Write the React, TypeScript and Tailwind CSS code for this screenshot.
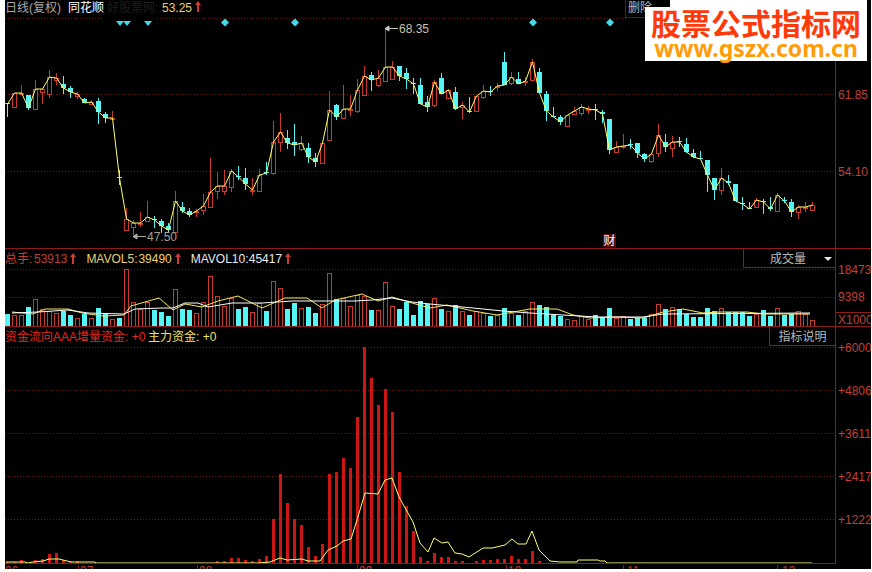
const font = "font-['Liberation_Sans','Noto_Sans_CJK_SC',sans-serif]";

// high, body top, body bottom, low, 1 = up (red) 0 = down (cyan)
const candles: number[][] = [
  [103,103,104,117,0],[93,93,107,108,1],[85,93,94,94,1],[95,95,108,110,0],[80,89,109,109,1],[88,89,92,104,1],[70,77,94,98,1],[73,78,80,85,1],
  [76,84,88,94,0],[86,88,92,98,0],[92,94,96,99,1],[98,99,103,103,0],[100,102,104,105,1],[98,101,112,124,0],[112,114,118,123,0],[111,118,119,120,1],
  [170,177,178,185,0],[208,219,230,230,1],[220,223,227,235,1],[212,223,224,227,1],[201,217,221,221,1],[216,219,220,228,0],[219,221,226,233,0],[223,226,230,233,0],
  [191,201,232,232,1],[202,207,211,213,0],[208,211,215,217,0],[209,211,212,217,1],[194,206,210,215,1],[158,192,207,207,1],[172,186,191,199,1],[170,186,191,195,1],
  [169,171,187,192,1],[166,176,177,180,0],[168,178,184,190,0],[178,190,191,195,1],[169,175,191,191,1],[162,172,173,175,0],[121,142,173,175,1],[113,132,142,152,1],
  [130,138,143,149,0],[124,142,145,156,0],[136,143,149,151,1],[143,148,157,163,0],[153,158,162,167,0],[143,143,163,163,1],[91,110,140,140,1],[104,105,117,120,0],
  [85,109,118,118,1],[95,109,110,116,1],[79,90,111,113,1],[66,76,95,95,1],[72,75,80,91,0],[70,78,85,87,1],[28,67,81,81,1],[61,67,79,79,1],
  [66,66,76,81,0],[68,73,79,89,0],[78,83,84,94,0],[78,85,104,104,0],[96,102,107,112,0],[80,82,105,107,1],[73,78,94,94,0],[89,90,98,98,1],
  [87,92,109,110,0],[102,105,107,119,1],[97,111,112,113,0],[96,96,111,111,1],[85,91,97,99,1],[86,91,92,96,0],[83,86,87,91,1],[52,62,85,85,0],
  [72,77,83,85,1],[72,79,84,84,0],[77,81,82,86,1],[59,62,80,80,1],[68,72,93,93,0],[91,94,111,121,0],[107,116,117,117,0],[115,117,122,125,0],
  [115,115,126,126,1],[107,111,114,114,1],[104,107,113,116,1],[106,109,110,114,1],[104,109,110,120,0],[110,112,114,123,0],[119,119,150,154,0],[141,147,152,152,1],
  [134,146,147,149,1],[139,144,145,149,0],[143,143,153,158,0],[153,154,159,162,0],[154,154,161,163,1],[124,135,153,157,1],[134,142,147,152,0],[136,142,148,157,1],
  [137,141,142,147,0],[138,144,152,153,0],[149,153,157,158,0],[151,158,159,159,0],[160,160,175,192,0],[178,178,190,200,0],[168,178,190,195,1],[175,181,183,185,0],
  [184,184,201,201,0],[197,203,204,210,0],[202,208,209,209,0],[198,200,207,208,1],[199,201,202,214,0],[197,207,209,211,0],[193,195,211,211,1],[197,200,201,203,0],
  [199,202,212,217,0],[205,207,212,219,1],[202,207,208,212,1],[202,205,210,210,1],
];

// bar tops, negative = cyan
const volumes = [
  -314,315,315,-307,299,309,311,313,-311,-315,318,-314,318,-308,-314,319,-318,269,302,309,302,-310,-312,-316,289,-309,-310,313,302,276,
  296,306,298,-309,-307,312,303,-311,281,288,-309,-303,308,-307,-313,304,273,-299,298,306,295,296,-310,310,282,306,-309,-302,-315,-301,-304,
  298,-309,311,-305,311,-315,311,313,-316,315,-308,313,-315,311,302,-305,-307,-315,-316,319,320,316,319,-315,-317,-308,318,316,-319,-318,-318,314,304,-309,307,-309,-314,-317,-317,
  -308,-311,308,-312,-312,-312,-316,314,-310,-316,308,-315,-314,311,314,320,
];

const moneyTops: Record<number, number> = {
  0:562,1:562,2:560,4:560,5:559,6:554,7:553,8:560,9:562,10:561,30:561,31:561,32:558,33:558,34:560,35:561,36:559,
  37:556,38:519,39:474,40:503,41:519,42:525,43:547,44:556,45:544,46:474,47:472,48:458,49:468,50:417,51:347,52:378,53:405,54:389,55:412,56:472,57:506,58:531,59:557,60:561,
  61:553,62:557,63:557,64:561,65:561,67:561,68:560,69:560,70:559,71:559,72:556,73:559,74:559,75:551,76:561,
};

const moneyLine = "6,562 25,562 28,563 33,562 43,561 49,559 59,559 67,561 72,562 95,562 96,563 258,563 270,562 280,558 287,560 302,559 308,561 320,561 328,550 337,546 343,541 351,539 357,520 365,493 378,494 385,480 392,478 399,497 413,522 420,543 428,552 434,538 442,543 448,542 455,553 462,554 469,557 483,548 492,548 505,545 512,539 518,544 526,544 532,531 539,550 550,561 560,562 577,562 578,560 598,560 600,561 605,561 607,563 812,563";

const volYellow = "12,312 33,314 45,309 68,309 82,313 103,316 124,315 131,306 145,302 159,298 173,310 185,304 202,307 218,301 238,296 262,308 278,301 285,298 307,298 322,308 335,300 362,294 378,301 392,297 412,303 430,308 447,305 473,311 497,315 530,309 557,309 573,315 590,318 617,317 643,318 663,312 683,309 703,313 720,312 747,312 763,314 810,314";
const volWhite = "12,313 38,312 68,310 88,313 124,314 135,309 162,308 173,308 185,303 198,303 208,307 232,303 262,303 292,301 332,301 355,301 372,300 392,298 412,302 430,304 473,308 503,311 530,313 563,315 597,317 643,317 663,314 810,313";

const grid = "#6e1616";
const red = "#c8392e";
const cyan = "#55f5f5";

function Up() {
  return (
    <svg width="6" height="11" viewBox="0 0 6 11" className="ml-[3px] shrink-0">
      <polygon points="3,0 6,4 4,4 4,11 2,11 2,4 0,4" fill="#d03a30" />
    </svg>
  );
}

function Dotted({ y, x1 = 5, x2 = 835 }: { y: number; x1?: number; x2?: number }) {
  return <line x1={x1} x2={x2} y1={y + 0.5} y2={y + 0.5} stroke={grid} strokeDasharray="1 2" />;
}

function Diamond({ x, half }: { x: number; half?: boolean }) {
  return half ? (
    <polygon points={`${x - 4},21 ${x + 4},21 ${x},26`} fill="#45d8e6" />
  ) : (
    <polygon points={`${x - 4},22.5 ${x},18.5 ${x + 4},22.5 ${x},26.5`} fill="#45d8e6" />
  );
}

function PriceChart() {
  const closes = candles.map((c, i) => `${7.5 + 7 * i},${c[4] ? c[1] : c[2]}`).join(" ");
  return (
    <svg width="830" height="230" viewBox="5 18 830 230" className="block">
      <Dotted y={18} x2={103} />
      <Dotted y={18} x1={157} x2={628} />
      <Dotted y={94} />
      <Dotted y={171} />
      {[120, 127, 148].map((x) => <Diamond key={x} x={x} half />)}
      {[225, 295, 533, 610].map((x) => <Diamond key={x} x={x} />)}
      {candles.map(([hi, top, bot, lo, up], i) => {
        const c = 7.5 + 7 * i;
        const col = up ? red : cyan;
        return (
          <g key={i}>
            <line x1={c} x2={c} y1={hi} y2={lo} stroke={col} />
            {up ? (
              <rect x={c - 2} y={top + 0.5} width={4} height={Math.max(bot - top, 1)} fill="#000" stroke={col} />
            ) : (
              <rect x={c - 2.5} y={top} width={5} height={Math.max(bot - top, 1)} fill={col} />
            )}
          </g>
        );
      })}
      <polyline points={closes} fill="none" stroke="#ffff66" strokeWidth="1" />
      <path d="M385 28.5H398M385 28.5l4-2.5v5z" stroke="#c8c8c0" fill="#c8c8c0" />
      <text x="399" y="33" fontSize="12" fill="#c8c0b0" className={font}>68.35</text>
      <path d="M133 236.5H146M133 236.5l4-2.5v5z" stroke="#b0b0a8" fill="#b0b0a8" />
      <text x="147" y="241" fontSize="12" fill="#a8a090" className={font}>47.50</text>
    </svg>
  );
}

function VolumeChart() {
  return (
    <svg width="830" height="58" viewBox="5 268 830 58" className="block">
      <Dotted y={269} />
      <Dotted y={297} />
      {volumes.map((v, i) => {
        const c = 7.5 + 7 * i;
        const top = Math.abs(v);
        return v < 0 ? (
          <rect key={i} x={c - 2.5} y={top} width={5} height={326 - top} fill={cyan} />
        ) : (
          <rect key={i} x={c - 2} y={top + 0.5} width={4} height={326 - top} fill="#000" stroke={red} />
        );
      })}
      <polyline points={volYellow} fill="none" stroke="#f4e860" />
      <polyline points={volWhite} fill="none" stroke="#ffffff" />
    </svg>
  );
}

function MoneyChart() {
  return (
    <svg width="830" height="217" viewBox="5 346 830 217" className="block">
      {[347, 390, 433, 476, 519].map((y) => <Dotted key={y} y={y} />)}
      {Object.entries(moneyTops).map(([i, top]) => (
        <rect key={i} x={6 + 7 * Number(i)} y={top} width={3} height={563 - top} fill="#cc1616" />
      ))}
      <polyline points={moneyLine} fill="none" stroke="#ffff70" />
    </svg>
  );
}

export default function App() {
  return (
    <div className={`h-[572px] w-[872px] bg-white text-[12px] leading-[14px] ${font}`}>
      <div className="relative ml-[5px] h-[569px] w-[866px] overflow-hidden bg-black">
        <div className="flex h-[249px] border-b border-[#8c1c1c]">
          <div className="w-[830px] shrink-0">
            <div className="flex h-[18px] items-start whitespace-nowrap pt-px">
              <span className="w-[63px] text-[#a8a8a8]">日线(复权)</span>
              <span className="w-[39px] text-white">同花顺</span>
              <span className="w-[55px] text-[#1e1e1e]">好股票网:</span>
              <span className="text-[#ecd070]">53.25</span>
              <Up />
              <div className="ml-[424px] -mt-px h-[18px] w-[40px] border-b border-l border-[#6e1616] pl-[2px] pt-px text-[#b8b8b8]">删除</div>
            </div>
            <PriceChart />
          </div>
          <div className="w-[36px] shrink-0 border-l border-[#8c1c1c] pl-[2px] pt-[88px] text-[#c04038]">
            <div className="h-[14px]">61.85</div>
            <div className="mt-[63px] h-[14px]">54.10</div>
          </div>
        </div>

        <div className="flex h-[78px] border-b border-[#8c1c1c]">
          <div className="w-[830px] shrink-0">
            <div className="flex h-[19px] items-center whitespace-nowrap">
              <span className="w-[29px] text-[#c04038]">总手:</span>
              <span className="text-[#c04038]">53913</span>
              <Up />
              <span className="ml-[10px] w-[52px] text-[#ecd070]">MAVOL5:</span>
              <span className="text-[#ecd070]">39490</span>
              <Up />
              <span className="ml-[10px] w-[58px] text-[#e8e8e8]">MAVOL10:</span>
              <span className="text-[#e8e8e8]">45417</span>
              <Up />
              <div className="ml-auto flex h-[19px] w-[92px] items-center border-b border-l border-[#8c1c1c] pl-[26px] pt-px text-[#b8b8b8]">
                成交量
                <svg width="8" height="4" viewBox="0 0 8 4" className="ml-[18px]"><polygon points="0,0 8,0 4,4" fill="#e8e8e8" /></svg>
              </div>
            </div>
            <VolumeChart />
          </div>
          <div className="w-[36px] shrink-0 whitespace-nowrap border-l border-[#8c1c1c] pl-[2px] pt-[14px] text-[#c04038]">
            <div className="h-[14px]">18473</div>
            <div className="mt-[13px] h-[14px]">9398</div>
            <div className="-ml-[2px] mt-[8px] h-[15px] border-t border-[#8c1c1c] pl-[2px]">X1000</div>
          </div>
        </div>

        <div className="flex h-[237px]">
          <div className="w-[830px] shrink-0 border-b border-[#8c1c1c]">
            <div className="flex h-[19px] items-center whitespace-nowrap pt-px">
              <span className="w-[143px] text-[#e02a20]">资金流向AAA增量资金: +0</span>
              <span className="text-[#f0e060]">主力资金: +0</span>
              <div className="ml-auto -mt-px flex h-[19px] w-[66px] items-center justify-center border-b border-l border-[#8c1c1c] pt-px text-[#b8b8b8]">指标说明</div>
            </div>
            <MoneyChart />
          </div>
          <div className="flex w-[36px] shrink-0 flex-col gap-[29px] whitespace-nowrap border-l border-[#8c1c1c] pl-[2px] pt-[14px] text-[#c04038]">
            <div className="h-[14px]">+6000</div>
            <div className="h-[14px]">+4806</div>
            <div className="h-[14px]">+3611</div>
            <div className="h-[14px]">+2417</div>
            <div className="h-[14px]">+1222</div>
          </div>
        </div>

        <div className="flex h-[5px] overflow-hidden pt-px leading-[12px] text-[#c04038]">
          <div className="w-[73px]">06</div>
          <div className="w-[119px] border-l border-[#8c1c1c] pl-px">07</div>
          <div className="w-[160px] border-l border-[#8c1c1c] pl-px">08</div>
          <div className="w-[149px] border-l border-[#8c1c1c] pl-px">09</div>
          <div className="w-[117px] border-l border-[#8c1c1c] pl-px">10</div>
          <div className="w-[154px] border-l border-[#8c1c1c] pl-[3px]">11</div>
          <div className="w-[58px] border-l border-[#8c1c1c] pl-[4px]">12</div>
        </div>

        {/* watermark over the chart corner */}
        <div className="absolute left-[665px] top-0 h-[8px] w-[197px] bg-white" />
        <div className="absolute left-[640px] top-[7px] flex h-[54px] w-[222px] flex-col items-center bg-white">
          <div className="font-['Noto_Sans_CJK_SC',sans-serif] text-[30px] font-bold leading-[30px] text-[#ff3a0a]">股票公式指标网</div>
          <div className="font-['Noto_Sans',sans-serif] text-[23px] font-bold leading-[22px] text-[#ff9c0a]">www.gszx.com.cn</div>
        </div>

        <div className="absolute left-[598px] top-[234px] flex h-[13px] w-[13px] items-center justify-center bg-[#5a0c0c] text-white">财</div>
      </div>
    </div>
  );
}
